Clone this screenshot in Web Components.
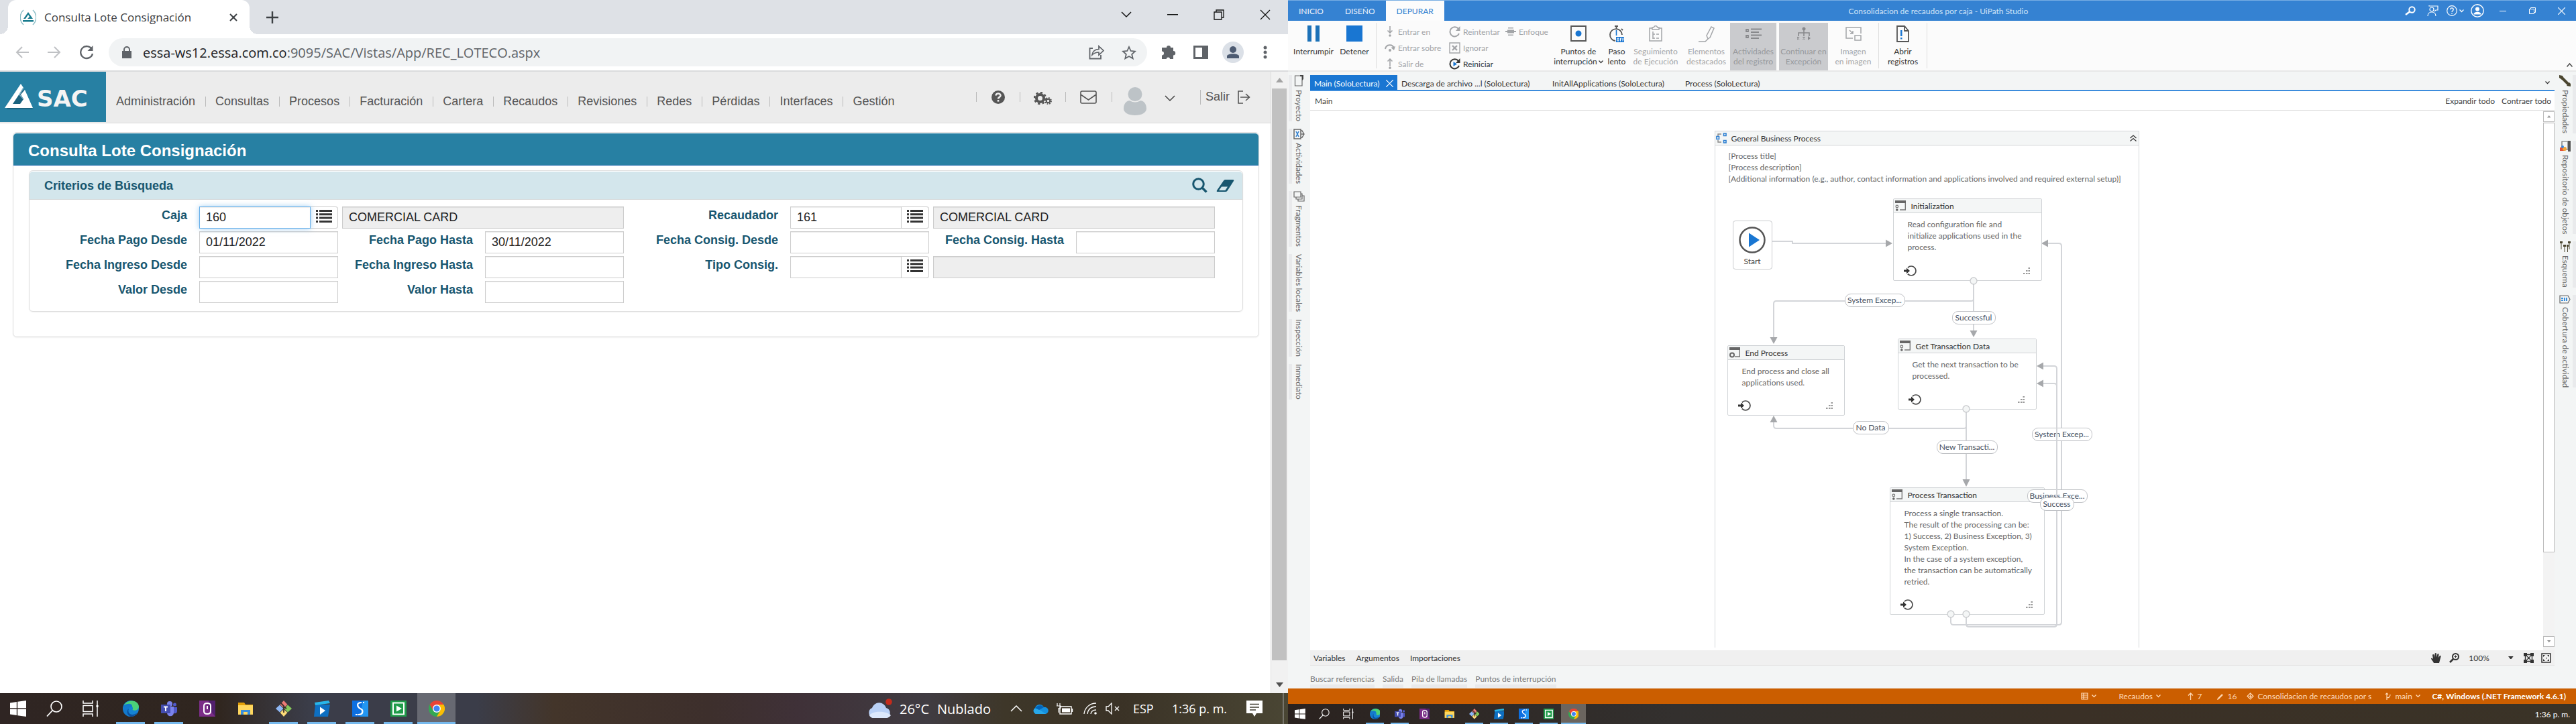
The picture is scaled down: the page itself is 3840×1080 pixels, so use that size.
<!DOCTYPE html>
<html lang="es">
<head>
<meta charset="utf-8">
<title>Escritorio</title>
<style>
html,body{margin:0;height:100%}
body{display:flex;font-family:"Open Sans","Noto Sans",sans-serif;background:#fff;overflow:hidden}
browser-window,studio-window{flex:1 1 0;min-width:0}
</style>
</head>
<body>
<browser-window></browser-window>
<studio-window></studio-window>
<script>
const RESET = `:host,*{box-sizing:border-box}button,input{font:inherit;color:inherit;margin:0}
button{background:none;border:0;padding:0;display:flex;align-items:center;justify-content:center;white-space:nowrap}
a{color:inherit;text-decoration:none}ui-icon{flex:none}`;

class Base extends HTMLElement {
  connectedCallback() {
    if (this.shadowRoot) return;
    const t = document.createElement('template');
    t.innerHTML = `<style>${RESET}${this.css()}</style>${this.html()}`;
    this.attachShadow({mode: 'open'}).append(t.content.cloneNode(true));
  }
  a(n, d = '') { return this.getAttribute(n) ?? d; }
  css() { return ':host{display:block}'; }
  html() { return '<slot></slot>'; }
}
const def = (n, c) => customElements.define(n, c);
const S = (w, d, x = '') => `<path d="${d}" fill="none" stroke="currentColor" stroke-width="${w}" ${x}/>`;
const F = (d, c = 'currentColor') => `<path d="${d}" fill="${c}"/>`;

/* name: [width, height, markup] */
const ICONS = {
  favicon: [24,24, S(1.5,'M5 1A15 15 0 0 0 5 23M19 1A15 15 0 0 1 19 23','opacity=".5"') + F('M12 4 5 14h3l4-6 2 3-3 3h8z') + F('M4 16h16v2.500H4z')],
  x: [14,14, S(2,'M2 2 12 12M12 2 2 12')],
  xthin: [16,16, S(1.3,'M1 1 15 15M15 1 1 15')],
  plus: [18,18, S(2.4,'M9 0V18M0 9H18')],
  chev: [16,10, S(1.5,'M1 1 8 8 15 1')],
  min: [16,2, F('M0 0H16V1.500H0z')],
  restore: [16,16, S(1.3,'M1 4H12V15H1zM4 4V1H15V12H12')],
  back: [20,18, S(2,'M20 9H2M10 1 2 9 10 17')],
  fwd: [20,18, S(2,'M0 9H18M10 1 18 9 10 17')],
  reload: [22,22, S(2.4,'M19 6.500A9 9 0 1 0 20 13') + F('M20.500 1V9H12.500z')],
  lock: [14,18, F('M0 7H14V18H0z') + S(2,'M3 8V5a4 4 0 0 1 8 0V8')],
  share: [24,22, S(1.8,'M6 5H1.500V20.500H18V15') + S(1.7,'M5 15C6 9 10 6.500 15 6.500V2L22 8.500 15 15V11C11 11 8 12 5 15z')],
  star: [22,21, S(1.8,'M11 2 13.700 8 20 8.600 15.200 13 16.700 19.300 11 16 5.300 19.300 6.800 13 2 8.600 8.300 8z')],
  puzzle: [22,22, F('M8 4a3 3 0 0 1 6 0H18V9a3.200 3.200 0 0 1 0 6.400V21H13a2.600 2.600 0 0 0-5.200 0H1V15.500a3 3 0 0 0 0-6V4z')],
  panel: [22,22, F('M0 1H22V21H0z') + F('M3 4H13V18H3z','#fff')],
  profile: [32,32, '<circle cx="16" cy="16" r="16" fill="#dbe0e7"/><circle cx="16" cy="12" r="5" fill="#4d5b72"/>' + F('M7 25V22C7 17 25 17 25 22V25z','#4d5b72')],
  dots: [6,20, '<circle cx="3" cy="3" r="2.500"/><circle cx="3" cy="10" r="2.500"/><circle cx="3" cy="17" r="2.500"/>'],
  sac: [46,40, F('M3 38 24 3 34 18 29 28 43 38z','#1b637f') + F('M0 36 24 0 28 6 12 30H23L28 23 24 16 30 9 42 36z','#fff') + S(1.5,'M28 6 22 16 28 23','style="color:#7db0c5"')],
  help: [20,20, '<circle cx="10" cy="10" r="10"/>' + S(2.6,'M6.500 7.500C6.500 3.500 13.500 3.500 13.500 7.500 13.500 10 10 9.800 10 12.500','style="color:#ececec"') + F('M8.700 14h2.600v2.600H8.700z','#ececec')],
  cogs: [27,21, '<circle cx="9.500" cy="9.500" r="5.500" fill="none" stroke="currentColor" stroke-width="4"/><circle cx="9.500" cy="9.500" r="8.400" fill="none" stroke="currentColor" stroke-width="2.600" stroke-dasharray="3.300 3.300"/><circle cx="21.500" cy="13.500" r="2.800" fill="none" stroke="currentColor" stroke-width="2"/><circle cx="21.500" cy="13.500" r="4.600" fill="none" stroke="currentColor" stroke-width="1.800" stroke-dasharray="1.800 1.800"/>'],
  mail: [25,20, S(1.6,'M1 3Q1 1 3 1H22Q24 1 24 3V17Q24 19 22 19H3Q1 19 1 17zM1 6 12.500 14 24 6')],
  avatar: [36,42, '<ellipse cx="18" cy="10.500" rx="10.500" ry="10.500"/>' + F('M1 32C1 24 6 20 10 20Q18 25 26 20C30 20 35 24 35 32 35 38 28 42 18 42S1 38 1 32z')],
  exit: [19,20, S(1.6,'M8 1H1V19H8M4 10H17M12 5 17.500 10 12 15')],
  search: [23,23, '<circle cx="9.500" cy="9.500" r="7.800" fill="none" stroke="currentColor" stroke-width="3"/>' + S(3.4,'M15 15 21.500 21.500')],
  eraser: [27,18, F('M13 0H25Q27 0 26 2L17 16Q16 18 14 18H2Q0 18 1 16L11 1.500Q12 0 13 0z') + F('M8 10.500H17L13.500 16H4z','#d3e6ec')],
  list: [24,19, F('M0 0H3V3H0zM5 0H24V3H5zM0 5.300H3V8.300H0zM5 5.300H24V8.300H5zM0 10.600H3V13.600H0zM5 10.600H24V13.600H5zM0 16H3V19H0zM5 16H24V19H5z')],
  tup: [11,7, F('M0 7 5.500 0 11 7z')], tdown: [11,7, F('M0 0 5.500 7 11 0z')],
  win: [24,24, F('M0 3.500 9.800 2V11.300H0zM11.200 1.800 24 0V11.300H11.200zM0 12.700H9.800V22L0 20.500zM11.200 12.700H24V24L11.200 22.200z')],
  tsearch: [24,24, '<circle cx="15" cy="9" r="8" fill="none" stroke="currentColor" stroke-width="1.600"/>' + S(1.8,'M9.500 14.500 1 23.500')],
  tview: [24,24, S(1.5,'M1 0V4H15V0M1 24V20H15V24M1 7.500H15V16.500H1zM22 0V24') + F('M20.500 7H23.500V10H20.500z')],
  edge: [24,24, '<circle cx="12" cy="12" r="12" fill="#1583d3"/>' + F('M2 7C7-3 24-1 24 9 24 14 18 16 14.500 14 17 9 11 5 2 7z','#4bd27a') + F('M2 7C9 3 15 5 14 10 9 9 6 14 9 19 11 23 16 24 18 22 9 27-3 21 2 7z','#1379cc') + F('M9 12C6 20 14 24 22 18 19 22 16 24 12 24 6 22 5 15 9 12z','#0b4f9e')],
  teams: [24,24, '<circle cx="13" cy="5" r="4" fill="#7b83eb"/><circle cx="20.500" cy="6" r="2.500" fill="#5059c9"/>' + F('M9 9H19V18C19 25 9 25 9 18z','#7b83eb') + F('M19 10H24V16C24 20 19 20 19 18z','#5059c9') + F('M0 6H14V19H0z','#444dae') + S(2,'M4 9.500H10M7 9.500V16','style="color:#fff"')],
  orch: [24,24, F('M0 0H24V24H0z','#7b2d87') + F('M14 0H24V24L14 12z','#52206e') + S(2,'M12 4Q7 4 7 8V16Q7 20 12 20T17 16V8Q17 4 12 4zM12 8V13','style="color:#fff"')],
  folder: [24,24, F('M1 3H10L12 6H23V21H1z','#e3a008') + F('M1 7H23V21H1z','#ffd75e') + F('M5 21V14H19V21H15V17H9V21z','#3a8fdc')],
  git: [24,24, F('M12 0 17.500 6 12 11 6.500 6z','#ee7b76') + F('M6 6.500 11.500 12 6 17.500 0 12z','#8fb8f5') + F('M18 6.500 24 12 18 17.500 12.500 12z','#86c95b') + F('M12 13 17.500 18 12 24 6.500 18z','#fcdb78') + S(1.8,'M8 4 12 8V18M12 9 16 12','style="color:#3b2e2a"')],
  studio: [24,24, F('M2 6H24L21 24H0z','#0e6fc1') + F('M1 3 22 0 24 4 2 7z','#28b6ea') + F('M9 9.500 17 15 9 21z','#fff')],
  assist: [24,24, F('M0 0H24V24H0z','#0d6fe0') + F('M16 0H24V24H12z','#2396f2') + S(2.2,'M14 3C5 3 8 10 12 12 17 14 17 21 9 21M8 21H5M16 3H18','style="color:#fff"')],
  robot: [24,24, F('M0 0H24V24H0z','#1f9c4a') + S(2,'M4 3.500H20V20.500H4z','style="color:#fff"') + F('M9 7.500 17 12 9 16.500z','#fff')],
  chrome: [24,24, '<circle cx="12" cy="12" r="12" fill="#34a853"/>' + F('M1.600 6A12 12 0 0 1 22.400 6H12L6.800 15z','#ea4335') + F('M22.400 6A12 12 0 0 1 12 24L17.200 15 12 6z','#fbbc04') + '<circle cx="12" cy="12" r="6" fill="#fff"/><circle cx="12" cy="12" r="4.600" fill="#4285f4"/>'],
  cloud: [38,30, F('M8 29A8 8 0 0 1 7 14 11 11 0 0 1 28 14 8 8 0 0 1 29 29z','#b9d0f6') + F('M3 25C8 18 28 18 35 25Q32 29 28 29H8Q4 28 3 25z','#dce8fc') + '<circle cx="32" cy="5" r="4.800" fill="#c42b1c"/>'],
  up: [18,10, S(1.5,'M1 9 9 1 17 9')],
  onedrive: [24,15, F('M5 15A5 5 0 0 1 4 6 7 7 0 0 1 17 5 5 5 0 0 1 20 15z','#1490df') + F('M8 7 20 15H5A5 5 0 0 1 3 7z','#28a8ea') + F('M8 3A7 7 0 0 1 17 5L10 9 4 6z','#0364b8')],
  battery: [26,17, S(1.4,'M6 5H23V16H6zM24.500 8V13') + F('M9 7.500H21V13.500H9z') + S(1.2,'M2 0V4M6 0V4M1 4H7V7Q4 10 4 7V14')],
  wifi: [20,18, S(1.3,'M1 17C2 8 9 1 19 1M6 17C7 10 11 6 19 6M11 17Q12 11 19 11') + '<circle cx="18" cy="16" r="1.800"/>'],
  mute: [22,18, S(1.3,'M1 6H4L9 1V17L4 12H1zM14 6 20 12M20 6 14 12')],
  note: [24,24, F('M0 0H24V19H15L12 24 9 19H0z') + S(1.6,'M5 5.500H19M5 10H19M5 14H14','style="color:#423f33"')],
  /* studio */
  pause: [18,24, F('M0 0H6V24H0zM12 0H18V24H12z','#1d72b8')],
  stop: [24,24, F('M0 0H24V24H0z','#1976d2')],
  into: [16,16, S(1.6,'M8 0V10M4.500 6.500 8 10 11.500 6.500') + '<circle cx="8" cy="14" r="1.800"/>'],
  over: [16,16, S(2,'M1 10C2 3 12 2 14 9') + F('M16 6 14 12 9.500 8z') + '<circle cx="8" cy="12" r="2"/>'],
  out: [16,16, S(1.6,'M8 12V1M4.500 4.500 8 1 11.500 4.500') + '<circle cx="8" cy="14.200" r="1.800"/>'],
  retry: [17,17, S(2,'M14 4A7 7 0 1 0 15 11') + F('M16.500 0V7H10z')],
  ignore: [17,17, S(1.4,'M1 1H16V16H1z') + S(2.4,'M5 5 12 12M12 5 5 12')],
  restart: [17,17, S(2,'M14 4A7 7 0 1 0 15 11') + F('M16.500 0V7H10z') + F('M6.500 5 12 8.500 6.500 12z','#1976d2')],
  focus: [16,12, F('M4 0H12V1.500H4zM4 10.500H12V12H4zM3 3.500H13V8.500H3zM0 5H16V7H0z')],
  bp: [24,24, S(1.8,'M1 1H23V23H1z') + '<circle cx="12" cy="12" r="4.500" fill="#1976d2"/>'],
  slow: [24,25, S(1.8,'M9 1H14M11.500 1V5M19 5 21 7M10 23A9 9 0 1 1 20 14') + F('M10.700 7H12.300V15H10.700z','#1976d2') + F('M11 17H23V25H11z','#1976d2') + S(1,'M13 19H15V23H13zM17.500 23.500V19H19.500M17.500 21H19M21 23.500V19H22.500M21 21H22.500','style="color:#fff"')],
  track: [20,24, S(1.5,'M5 4H1V23H19V4H15M5 6V3H7Q10-2 13 3H15V6zM6 9V20M6 13H9M6 19H9M11 13H15M11 19H15')],
  pen: [24,25, S(1.5,'M0 24H10L14 20 12 15 19 2 23 4 17 18 14 20')],
  log: [24,16, S(1.8,'M1 2H4V5H1zM8 1.500H24M8 6H20M1 11H4V14H1zM8 10.500H24M8 15H20')],
  cont: [20,20, '<circle cx="10" cy="3" r="2.500"/>' + S(1.6,'M10 5V9M2 14V9H18V14M10 9V14') + S(1.2,'M0 15 3 19M3 15 0 19M8.500 15 11.500 19M11.500 15 8.500 19') + F('M16 14 20 17 16 20z')],
  pip: [24,21, S(1.5,'M23 10V1H1V17H11M14 13H23V20H14zM6 5 11 10M11 6V10H7')],
  logs: [19,25, S(1.8,'M1 1H12L18 8V24H1zM12 1V8H18') + F('M6 7H8.500V16H6zM6 18H8.500V20.500H6z','#1976d2')],
  usearch: [18,14, '<circle cx="11.500" cy="5.500" r="4.200" fill="none" stroke="currentColor" stroke-width="2"/>' + S(2.6,'M8 8.500 2 13')],
  feedback: [17,16, S(1.2,'M3 0V1H16V7H13L11 9') + '<circle cx="7" cy="6" r="3" fill="none" stroke="currentColor" stroke-width="1.200"/>' + S(1.2,'M1 16C1 8 13 8 13 16')],
  qhelp: [16,16, '<circle cx="8" cy="8" r="7.300" fill="none" stroke="currentColor" stroke-width="1.200"/>' + S(1.3,'M5.800 6.200C5.800 3.200 10.200 3.200 10.200 6.200 10.200 8 8 7.800 8 10M8 11.500V13')],
  user: [20,20, '<circle cx="10" cy="10" r="9.200" fill="none" stroke="currentColor" stroke-width="1.400"/><circle cx="10" cy="7.500" r="3"/>' + F('M4.500 15.500C4.500 10.500 15.500 10.500 15.500 15.500z')],
  sx: [11,11, S(1.2,'M0 0 11 11M11 0 0 11')],
  srestore: [10,10, S(1,'M.5 2.500H7.500V9.500H.5zM2.500 2.500V.5H9.500V7.500H7.500')],
  smin: [10,1, F('M0 0H10V1H0z')],
  schev: [7,5, S(1.3,'M.5 .5 3.500 3.500 6.500 .5')], sup: [9,6, S(1.5,'M.5 5.500 4.500 1 8.500 5.500')],
  proj: [14,17, S(1.2,'M1.500 1H12V16H1.500z') + F('M9 0H14V6L12 8V2H9z','#444')],
  acts: [17,16, S(1.5,'M1 1H11V15H1z') + S(1.4,'M11 3H13L16 8 13 13H11M12 8H16') + S(1.6,'M4 4 8 12M8 4 4 12','style="color:#2f7fd0"')],
  frag: [17,16, S(1.2,'M1 1H11V9H1zM4 9.500V12H13V4H11.500M7 12.500V15H16V7H13.500')],
  wrench: [17,17, S(4,'M5 5 14 14','style="color:#4b4630"') + F('M0 0 5 1 7 5 4 7 0 4zM11 16 15 11 17 13V17z','#4b4630')],
  repo: [16,16, S(1.2,'M3 1H12V13H3z') + F('M10 0H16V16H12V0z','#555') + F('M0 10H7V15H0z','#e0533a') + '<circle cx="7" cy="12" r="3" fill="#f0a63a"/><circle cx="4" cy="9" r="2" fill="#3a86d8"/>'],
  outline: [16,16, F('M0 0H4V3H0zM12 0H16V3H12zM5 5H9V8H5zM10 5H13V8H10zM1.500 3H2.500V12H1.500zM13.500 3H14.500V12H13.500zM6.500 8H7.500V16H6.500zM11 8H12V16H11z','#4b4630')],
  cover: [17,13, S(1.2,'M1 1H13L16 6.500 13 12H1z') + F('M3 4H6V6H3zM7 4H9V9H7zM3 7H6V9H3zM10 4H12V9H10z','#3a8fdc')],
  seq: [16,16, S(1.4,'M8 2H3V5M3 11V14H8','style="color:#888"') + S(1.6,'M1 5.500H4.500V9.500H1zM11.500 1H15V4.500H11.500zM11.500 11.500H15V15H11.500z','style="color:#2a7dd1"')],
  dchev: [10,10, S(1.3,'M.5 5 5 1 9.500 5M.5 9.500 5 5.500 9.500 9.500')],
  state: [16,16, F('M0 0H16V4H0z','#666') + S(1.4,'M15.300 4V14H7','style="color:#777"') + '<circle cx="2.800" cy="9" r="1.800" fill="none" stroke="#777" stroke-width="1.200"/><circle cx="2.800" cy="14" r="1.800" fill="#666"/>'],
  fstate: [16,16, F('M0 0H16V4H0z','#666') + S(1.4,'M15.300 4V14H8','style="color:#777"') + '<circle cx="4" cy="11.500" r="3" fill="none" stroke="#666" stroke-width="2"/>'],
  enter: [19,16, '<circle cx="11" cy="8" r="7" fill="none" stroke="#4a4a4a" stroke-width="1.700"/>' + F('M2 3H6V13H2z','#fff') + F('M0 6.500H4V3.500L9 8 4 12.500V9.500H0z','#333')],
  grip: [10,10, F('M7.500 0H10V2H7.500zM4 4H6.500V6H4zM7.500 4H10V6H7.500zM0 8H2.500V10H0zM4 8H6.500V10H4zM7.500 8H10V10H7.500z','#999')],
  play: [40,40, '<circle cx="20" cy="20" r="18.500" fill="#fff" stroke="#555" stroke-width="2.500"/>' + F('M15 9.500 31 20 15 30.500z','#1976d2')],
  hand: [15,15, F('M4 15C3 12 0 10 0 8Q1 7 3 9L2 3Q3 1 4.500 3L5 7 5.500 1Q7-1 8 1V6.500L9.500 1.500Q11 .5 11.500 2L11 7 13 4Q15 3.500 14.500 5.500L12 15z')],
  zoomi: [15,15, '<circle cx="9.500" cy="5.500" r="4.500" fill="none" stroke="currentColor" stroke-width="2"/>' + S(2.6,'M6 9 1 14') + S(1,'M7.500 5.500H11.500M9.500 3.500V7.500')],
  fit: [15,15, F('M0 0H5V5H0zM10 0H15V5H10zM0 10H5V15H0zM10 10H15V15H10z') + S(1.4,'M5 2.500H10M5 12.500H10M2.500 5V10M12.500 5V10M5 5 10 10M10 5 5 10')],
  fitall: [15,15, S(1.5,'M1 1H14V14H1z') + F('M3 3H6L3 6zM12 3V6L9 3zM3 12V9L6 12zM12 12H9L12 9zM7 7H8.500V8.500H7z')],
  fork: [10,12, S(1.2,'M3 11V1M3 8Q8 8 8 3M1 3 3 1 5 3')], diam: [11,11, S(1.2,'M5.500 1 10 5.500 5.500 10 1 5.500zM5.500 3V8M3 5.500H8')],
  arrup: [9,11, S(1.3,'M4.500 11V1M1 4.500 4.500 1 8 4.500')], pencil: [10,10, S(2.4,'M2 8 8 2') + F('M0 10 1 7 3 9z')],
  db: [11,11, S(1.2,'M1 1H10V10H1zM1 4H10M1 7H10M4 1V10')]
};
def('ui-icon', class extends Base {
  css() { return ':host{display:inline-flex;line-height:0}svg{display:block;fill:currentColor}'; }
  html() {
    const [w, h, b] = ICONS[this.a('name')], k = +this.a('scale', '1');
    return `<svg width="${w*k}" height="${h*k}" viewBox="0 0 ${w} ${h}" aria-hidden="true">${b}</svg>`;
  }
});
const ic = (n, x = '') => `<ui-icon name="${n}" ${x}></ui-icon>`;

/* ---------- browser ---------- */
def('browser-window', class extends Base {
  css() { return `:host{display:flex;flex-direction:column;height:100vh;min-width:0}
    main{flex:1;display:flex;min-height:0}.page{flex:1;min-width:0;border-right:1px solid #ddd;font-family:"Liberation Sans",Arial,sans-serif}`; }
  html() { return `<browser-tabs></browser-tabs><browser-toolbar></browser-toolbar>
    <main><div class="page"><sac-header></sac-header><sac-search></sac-search></div><scroll-track></scroll-track></main>
    <task-bar></task-bar>`; }
});
def('browser-tabs', class extends Base {
  css() { return `:host{display:flex;height:51px;background:#dee1e6;color:#3c4043;padding-left:12px}
    .tab{width:360px;background:#fff;border-radius:12px 12px 0 0;display:flex;align-items:center;padding:0 17px 0 18px;font-size:17px;position:relative}
    .tab:before,.tab:after{content:"";position:absolute;bottom:0;width:12px;height:12px}
    .tab:before{left:-12px;background:radial-gradient(circle at 0 0,#dee1e6 12px,#fff 12px)}
    .tab:after{right:-12px;background:radial-gradient(circle at 100% 0,#dee1e6 12px,#fff 12px)}
    .tab ui-icon:first-child{color:#187b8e}.tab button ui-icon{color:#3c4043}
    .t{margin-left:12px;flex:1;white-space:nowrap}.new{width:67px}.sp{flex:1}.w{width:69px;height:43px;color:#111}`; }
  html() { return `<div class="tab">${ic('favicon')}<span class="t">Consulta Lote Consignación</span><button aria-label="Cerrar pestaña"><span></span>${ic('x')}</button></div>
    <button class="new" aria-label="Nueva pestaña">${ic('plus')}</button><span class="sp"></span>
    ${['chev','min','restore','xthin'].map(n => `<button class="w" aria-label="${n}">${ic(n)}</button>`).join('')}`; }
});
def('browser-toolbar', class extends Base {
  css() { return `:host{display:flex;align-items:center;height:56px;border-bottom:2px solid #dadbdd;background:#fff;color:#5f6368;padding:0 10px 0 9px}
    button{width:48px;height:42px}.off{color:#bfc1c4}
    .pill{flex:1;height:42px;border-radius:21px;background:#f1f3f4;display:flex;align-items:center;margin:0 8px 0 9px;padding:0 3px 0 20px;font-size:20px}
    .pill span{flex:1;margin-left:17px;white-space:nowrap}b{font-weight:400;color:#202124}`; }
  html() { return `<button class="off" aria-label="Atrás">${ic('back')}</button><button class="off" aria-label="Adelante">${ic('fwd')}</button><button aria-label="Recargar">${ic('reload')}</button>
    <div class="pill">${ic('lock')}<span><b>essa-ws12.essa.com.co</b>:9095/SAC/Vistas/App/REC_LOTECO.aspx</span><button aria-label="Compartir">${ic('share')}</button><button aria-label="Favorito">${ic('star')}</button></div>
    ${['puzzle','panel','profile','dots'].map(n => `<button aria-label="${n}">${ic(n)}</button>`).join('')}`; }
});
def('scroll-track', class extends Base {
  css() { return `:host{display:flex;flex-direction:column;width:25px;background:#f1f1f1;padding:0 2px 0 1px}
    span{height:25px;display:flex;align-items:center;justify-content:center;color:#a3a3a3;flex:none}span:last-child{color:#505050}
    i{background:#c1c1c1;flex:853}b{flex:24}`; }
  html() { return `<span>${ic('tup')}</span><i></i><b></b><span>${ic('tdown')}</span>`; }
});
def('sac-header', class extends Base {
  css() { return `:host{display:flex;height:77px;background:#ececec;border-bottom:1px solid #dcdcdc;color:#555;font-size:18px}
    .logo{width:158px;height:75px;background:#2780a3;display:flex;align-items:center;padding:0 0 0 7px;color:#f4f4f4;font:bold 34px/34px "DejaVu Sans",sans-serif}
    .logo span{margin:4px 0 0 2px}
    nav{display:flex;align-items:center;padding-top:12px;line-height:20px}
    nav a{padding:0 15px;position:relative}nav a+a:before,.c:before{content:"";position:absolute;left:0;top:3px;height:15px;border-left:1px solid #bbb}
    .sp{flex:1}.c{position:relative;display:flex;align-items:center;justify-content:center;height:75px}.c:before{top:30px}
    .a{width:65px}.b{width:68px;padding-top:6px}.m{width:69px}.u{width:132px;justify-content:flex-start;padding-left:17px;color:#bdc3c7;padding-top:12px}
    .u .v{color:#444;margin:-8px 0 0 26px}.s{width:105px;justify-content:flex-start;padding-left:8px;gap:12px}.s:before{top:27px;height:22px}`; }
  html() { return `<div class="logo">${ic('sac')}<span>SAC</span></div>
    <nav>${['Administración','Consultas','Procesos','Facturación','Cartera','Recaudos','Revisiones','Redes','Pérdidas','Interfaces','Gestión'].map(t => `<a href="#">${t}</a>`).join('')}</nav><span class="sp"></span>
    <button class="c a" aria-label="Ayuda">${ic('help')}</button><button class="c b" aria-label="Configuración">${ic('cogs')}</button><button class="c m" aria-label="Mensajes">${ic('mail')}</button>
    <button class="c u" aria-label="Usuario">${ic('avatar')}<ui-icon class="v" name="chev"></ui-icon></button><a class="c s" href="#">Salir ${ic('exit')}</a>`; }
});
def('panel-box', class extends Base {
  css() { return `:host{display:block;border:1px solid #ddd;border-radius:6px;padding:1px 0 0;box-shadow:0 1px 2px rgba(0,0,0,.06)}
    header{display:flex;align-items:center;justify-content:space-between;border-radius:5px 5px 0 0}
    h1,h2{margin:0;font-weight:bold;white-space:nowrap}
    .l1{height:48px;background:#2780a3;border-bottom:1px solid #2b72b0;color:#fff;padding:4px 22px 0}.l1 h1{font-size:24px;line-height:28px}
    .l2{height:42px;background:#d3e6ec;border-bottom:1px solid #d5d9da;color:#17566f;padding:0 12px 0 22px}.l2 h2{font-size:18px;line-height:22px}`; }
  html() { const l = this.a('level'); return `<header class="l${l}"><h${l}>${this.a('heading')}</h${l}><slot name="tools"></slot></header><slot></slot>`; }
});
def('form-field', class extends Base {
  css() { return `:host{display:contents}label{text-align:right;font-weight:bold;color:#17566f;line-height:26px;white-space:nowrap}
    .g{display:flex;height:33px;min-width:0}input{border:1px solid #ccc;box-shadow:inset 0 1px 1px rgba(0,0,0,.08);height:33px;width:100%;min-width:0;padding:0 9px;background:#fff;color:#222;outline:0}
    .g input{flex:1}.g button{width:41px;border:1px solid #ccc;border-left:0;border-radius:0 4px 4px 0;color:#333;padding:0 1px 4px 0}
    .f{border-color:#66afe9!important;box-shadow:inset 0 1px 1px rgba(0,0,0,.08),0 0 8px rgba(102,175,233,.6)!important;position:relative}
    .d{grid-column:span 2;margin-left:-12px;width:calc(100% + 12px);background:#eee}`; }
  html() { const L = this.a('label'), look = this.hasAttribute('lookup');
    return `<label for="i">${L}</label><div class="g"><input id="i" value="${this.a('value')}" class="${this.hasAttribute('focused') ? 'f' : ''}">${look ? `<button type="button" aria-label="Buscar ${L}">${ic('list')}</button>` : ''}</div>
      ${look ? `<input class="d" readonly aria-label="Descripción ${L}" value="${this.a('desc')}">` : ''}`; }
});
def('sac-search', class extends Base {
  css() { return `:host{display:block;padding:13px 17px 0 19px}
    .in{display:block;margin:7px 23px 37px}.tools{display:flex;gap:13px;align-items:center;color:#17566f}
    form{display:flex;padding:10px 41px 12px 5px;font-size:18px}
    .h{flex:1;display:grid;grid-template-columns:212fr 207fr 183fr 207fr;gap:4px 18px;padding-left:18px;align-content:start;grid-auto-rows:33px}`; }
  html() { return `<panel-box level="1" heading="Consulta Lote Consignación"><panel-box class="in" level="2" heading="Criterios de Búsqueda">
    <div slot="tools" class="tools"><button aria-label="Buscar">${ic('search')}</button><button aria-label="Limpiar">${ic('eraser')}</button></div>
    <form><div class="h"><form-field label="Caja" value="160" lookup focused desc="COMERCIAL CARD"></form-field>
      <form-field label="Fecha Pago Desde" value="01/11/2022"></form-field><form-field label="Fecha Pago Hasta" value="30/11/2022"></form-field>
      <form-field label="Fecha Ingreso Desde"></form-field><form-field label="Fecha Ingreso Hasta"></form-field>
      <form-field label="Valor Desde"></form-field><form-field label="Valor Hasta"></form-field></div>
    <div class="h"><form-field label="Recaudador" value="161" lookup desc="COMERCIAL CARD"></form-field>
      <form-field label="Fecha Consig. Desde"></form-field><form-field label="Fecha Consig. Hasta"></form-field>
      <form-field label="Tipo Consig." lookup></form-field></div></form></panel-box></panel-box>`; }
});
def('task-bar', class extends Base {
  css() { return this.hasAttribute('compact') ? `:host{display:flex;height:30px;background:linear-gradient(90deg,#2a221f,#33302e 30%,#3a3026 60%,#3a3327);color:#fff;font-size:12px;padding:0 9px 0 0;align-items:center}
    button{width:37px;height:30px;position:relative}.s{width:36px}.s3{margin-right:3px}.run:after{content:"";position:absolute;bottom:0;left:5px;right:5px;height:2px;background:#76b9ed}.on{background:#6b655f}.on:after{left:0;right:0}
    .sp{flex:1}`
    : `:host{display:flex;height:46px;background:linear-gradient(90deg,#2f2523 0,#30261f 17%,#3b3d49 24%,#3b3d49 37%,#43352a 43%,#3d2f2c 55%,#3f3138 62%,#403c42 72%,#3e3729 78%,#3a3226 87%,#4a4634 100%);color:#fff;font-size:20px;align-items:center}
    button{width:57px;height:46px;position:relative}.s{width:54px}.s3{margin-right:4px}.run:after{content:"";position:absolute;bottom:0;left:7px;right:7px;height:3px;background:#76b9ed}.on{background:#676972}.on:after{left:0;right:0}
    .sp{flex:1}.r{display:flex;align-items:center;white-space:nowrap}.r>*{flex:none}`; }
  html() { const c = this.hasAttribute('compact'), k = c ? .66 : 1;
    const items = ['win s','tsearch s','tview s s3','edge run','teams run','orch','folder','git run','studio run','assist run','robot run','chrome run on'];
    return items.map(s => { const [n, ...cl] = s.split(' '); return `<button class="${cl.join(' ')}" aria-label="${n}">${ic(n, `scale="${k}"`)}</button>`; }).join('') +
      '<span class="sp"></span>' + (c ? '<span>1:36 p. m.</span>' :
      `<div class="r">${ic('cloud')}<span style="width:56px;margin-left:10px">26°C</span><span style="width:109px">Nublado</span>${ic('up')}<span style="width:15px"></span>${ic('onedrive')}<span style="width:11px"></span>${ic('battery')}<span style="width:15px"></span>${ic('wifi')}<span style="width:13px"></span>${ic('mute')}<span style="width:58px;margin-left:19px;font-size:18px">ESP</span><span style="width:111px;font-size:18px">1:36 p. m.</span>${ic('note')}<span style="width:30px"></span><span style="width:8px;height:46px;border-left:2px solid #77756b"></span></div>`); }
});

/* ---------- studio ---------- */
def('studio-window', class extends Base {
  css() { return `:host{display:flex;flex-direction:column;height:100vh;background:#f3f5f5;color:#444;font-family:Lato,"Open Sans",sans-serif;font-size:12px;min-width:0}
    .body{flex:1;display:flex;min-height:0}.mid{flex:1;min-width:0;display:flex;flex-direction:column}
    .tabs{display:flex;padding-top:5px;height:29px;border-bottom:2px solid #3c8cdc;align-items:stretch;color:#333}
    .tabs button{padding:2px 0 0 6px;justify-content:flex-start}.tabs .on{background:#1976d2;color:#fff;gap:9px}
    .sp{flex:1}.crumb{display:flex;justify-content:space-between;height:29px;background:#fff;border-bottom:1px solid #ddd;align-items:center;padding:0 5px 0 7px}
    .crumb div{display:flex;gap:10px}
    .cv{flex:1;background:#fff;display:flex;justify-content:center;min-height:0}
    .hold{flex:1;display:flex;justify-content:center;padding:30px 0 4px}
    .sb{width:17px;background:#f3f3f3;display:flex;flex-direction:column;padding:1px 0 5px}
    .sb span{height:16px;border:1px solid #bbb;background:#fff;color:#999;display:flex;align-items:center;justify-content:center}
    .sb i{flex:642;border:1px solid #bbb;background:#fff;margin-top:1px}.sb b{flex:125}
    .foot{height:23px;background:#f0f0f0;border-bottom:1px solid #e4e4e4;display:flex;align-items:center;padding:0 5px;color:#333}
    .foot .l{gap:16px;display:flex;flex:1}
    .bt{display:flex;gap:12px;padding:11px 0 0 33px;height:34px;color:#777}.bt button{line-height:17px;height:22px;align-items:flex-start;border-bottom:5px solid #e9eaec}
    .status{height:23px;background:#cb5e00;display:flex;justify-content:flex-end;align-items:center;color:#ffd9b5;padding-right:15px;white-space:nowrap}
    .status span{display:flex;align-items:center;gap:5px}.status b{color:#fff}`; }
  html() { return `<studio-title></studio-title><studio-ribbon></studio-ribbon>
  <div class="body"><side-dock side="left" items="proj:Proyecto,acts:Actividades,frag:Fragmentos,:Variables locales,:Inspección,:Inmediato"></side-dock>
   <div class="mid"><div class="tabs"><button class="on" style="width:130px">Main (SoloLectura) ${ic('sx')}</button><button style="width:225px">Descarga de archivo ...l (SoloLectura)</button><button style="width:198px">InitAllApplications (SoloLectura)</button><button>Process (SoloLectura)</button><span class="sp"></span><button style="width:14px;padding:0" aria-label="Más pestañas">${ic('schev')}</button></div>
   <div class="crumb"><span>Main</span><div><a href="#">Expandir todo</a><a href="#">Contraer todo</a></div></div>
   <div class="cv"><div class="hold"><flow-chart></flow-chart></div><div class="sb"><span>${ic('tup','scale=".5"')}</span><i></i><b></b><span>${ic('tdown','scale=".5"')}</span></div></div>
   <div class="foot"><div class="l"><button>Variables</button><button>Argumentos</button><button>Importaciones</button></div>
     ${ic('hand')}<span style="width:12px"></span>${ic('zoomi')}<span style="margin-left:14px;width:59px">100%</span>${ic('tdown','scale=".7"')}<span style="width:15px"></span>${ic('fit')}<span style="width:11px"></span>${ic('fitall')}</div></div>
   <side-dock side="right" items="wrench:Propiedades,repo:Repositorio de objetos,outline:Esquema,cover:Cobertura de actividad"></side-dock></div>
  <div class="bt"><button>Buscar referencias</button><button>Salida</button><button>Pila de llamadas</button><button>Puntos de interrupción</button></div>
  <div class="status"><span style="width:56px">${ic('db')}${ic('schev')}</span><span style="width:103px">Recaudos ${ic('schev')}</span><span style="width:44px">${ic('arrup')}7</span><span style="width:44px">${ic('pencil')}16</span><span style="width:206px">${ic('diam')}Consolidacion de recaudos por s</span><span style="width:70px">${ic('fork')}main ${ic('schev')}</span><b>C#, Windows (.NET Framework 4.6.1)</b></div>
  <task-bar compact></task-bar>`; }
});
def('studio-title', class extends Base {
  css() { return `:host{display:flex;height:31px;background:#3582d2;border-top:1px solid #78aee3;color:#fff;align-items:center}
    nav{display:flex;height:30px}nav a{padding:0 16px;display:flex;align-items:center;color:#e8f1fb}nav .on{background:#fcfcfc;color:#2f7fd0}
    .t{flex:1;text-align:center;padding-left:50px;color:#cfe3f7}.r{display:flex;align-items:center}.r button{height:30px}`; }
  html() { return `<nav><a href="#">INICIO</a><a href="#">DISEÑO</a><a href="#" class="on">DEPURAR</a></nav><span class="t">Consolidacion de recaudos por caja - UiPath Studio</span>
    <div class="r"><button style="width:34px" aria-label="Buscar">${ic('usearch')}</button><button style="width:33px" aria-label="Comentarios">${ic('feedback')}</button><button style="width:34px;gap:3px" aria-label="Ayuda">${ic('qhelp')}${ic('schev')}</button><button style="width:32px" aria-label="Cuenta">${ic('user')}</button><button style="width:44px" aria-label="Minimizar">${ic('smin')}</button><button style="width:44px" aria-label="Restaurar">${ic('srestore')}</button><button style="width:43px" aria-label="Cerrar">${ic('sx')}</button></div>`; }
});
def('ribbon-button', class extends Base {
  css() { return `:host{display:flex}button{flex:1;flex-direction:column;justify-content:flex-start;padding-top:7px;line-height:15px;white-space:nowrap;color:#333}
    .i{height:24px;display:flex;align-items:center;color:#555;margin-bottom:7px}span{text-align:center}
    :host([off]) button{color:#a3a5a8}:host([off]) .i{color:#a3a5a8}:host([sel]){padding-top:3px}:host([sel]) button{background:#cacbce;color:#96989b;padding-top:4px}:host([sel]) .i{color:#88898c}`; }
  html() { return `<button><span class="i">${ic(this.a('icon'))}</span><span><slot></slot></span></button>`; }
});
def('studio-ribbon', class extends Base {
  css() { return `:host{display:flex;height:76px;background:#fbfbfb;border-bottom:2px solid #e7e8e8;padding:0 0 0 3px;align-items:stretch}
    .sep{width:1px;margin:3px 0;background:#ddd}.g{display:grid;grid-template-rows:24px 24px 24px;padding-top:4px}.g button{justify-content:flex-start;color:#a3a5a8;gap:4px}
    .g .k{color:#333}.sp{flex:1}.e{align-self:flex-end;height:16px;width:14px;justify-content:flex-start}`; }
  html() { const g = a => `<div class="g">${a.map(([i, t, c]) => `<button class="${c || ''}">${ic(i)}${t}</button>`).join('')}</div>`;
    return `<ribbon-button icon="pause" style="width:70px">Interrumpir</ribbon-button><ribbon-button icon="stop" style="width:52px;margin-right:6px">Detener</ribbon-button><div class="sep"></div>
    <div style="width:12px"></div><div style="width:96px">${g([['into','Entrar en'],['over','Entrar sobre'],['out','Salir de']])}</div>
    <div style="width:84px">${g([['retry','Reintentar'],['ignore','Ignorar'],['restart','Reiniciar','k']])}</div><div style="width:70px">${g([['focus','Enfoque']])}</div>
    <ribbon-button icon="bp" style="width:78px">Puntos de<br>interrupción<ui-icon name="schev" style="vertical-align:middle;margin-left:2px"></ui-icon></ribbon-button><ribbon-button icon="slow" style="width:36px">Paso<br>lento</ribbon-button>
    <ribbon-button off icon="track" style="width:80px">Seguimiento<br>de Ejecución</ribbon-button><ribbon-button off icon="pen" style="width:71px">Elementos<br>destacados</ribbon-button>
    <ribbon-button off sel icon="log" style="width:69px;margin-right:4px">Actividades<br>del registro</ribbon-button><ribbon-button off sel icon="cont" style="width:73px">Continuar en<br>Excepción</ribbon-button>
    <ribbon-button off icon="pip" style="width:75px">Imagen<br>en imagen</ribbon-button><div class="sep"></div><ribbon-button icon="logs" style="width:71px">Abrir<br>registros</ribbon-button><div class="sep"></div>
    <span class="sp"></span><button class="e" aria-label="Contraer cinta">${ic('sup')}</button>`; }
});
def('side-dock', class extends Base {
  css() { const l = this.a('side') === 'left'; return `:host{display:flex;flex-direction:column;gap:11px;padding-top:5px;width:${l ? 33 : 32}px;color:#666;align-items:stretch}
    button{writing-mode:vertical-rl;justify-content:flex-start;gap:5px;line-height:18px;${l ? 'margin-left:1px;border-left:5px solid #e9eaec;padding-left:1px;width:24px' : 'border-right:5px solid #e9eaec;width:32px;padding-left:4px'}}`; }
  html() { return this.a('items').split(',').map(s => { const [i, t] = s.split(':'); return `<button>${i ? ic(i) : ''}${t}</button>`; }).join(''); }
});
def('flow-node', class extends Base {
  css() { return `:host{position:absolute;display:flex;flex-direction:column;border:1px solid #d0d3d6;border-radius:2px;background:#fff;color:#666}
    header{height:21px;background:#f4f6f6;border-bottom:1px solid #d0d3d6;display:flex;align-items:center;gap:8px;padding:0 2px;color:#333;white-space:nowrap}
    p{margin:8px 0 0 21px;line-height:17px;flex:1;white-space:nowrap}footer{display:flex;justify-content:space-between;align-items:center;padding:0 17px 6px 15px}`; }
  html() { return `<header>${ic(this.a('icon','state'))}${this.a('heading')}</header><p><slot></slot></p><footer>${ic('enter')}${ic('grip')}</footer>`; }
});
def('flow-label', class extends Base {
  css() { return `:host{position:absolute;height:20px;border:1px solid #c0c2c6;border-radius:9px;background:#fff;color:#44505f;display:flex;align-items:center;justify-content:center;line-height:18px;white-space:nowrap}`; }
});
def('flow-chart', class extends Base {
  css() { return `:host{display:block;position:relative;width:633px;border:1px solid #d5d7da;border-bottom:0}
    header{height:21px;background:#f4f6f6;border-bottom:1px solid #d0d3d6;display:flex;align-items:center;gap:7px;padding:0 3px 0 1px;color:#333}header span{flex:1}
    .d{margin:7px 0 0 20px;line-height:17px;color:#666;white-space:nowrap}
    svg{position:absolute;left:0;top:0;fill:none;stroke:#d3d5d9;stroke-width:2}svg .a{fill:#a6a8ab;stroke:none}svg .c{fill:#f4f6f6;stroke:#c9cbce;stroke-width:1.3}
    .start{position:absolute;left:26px;top:133px;width:59px;height:73px;border:1px solid #c9cbce;border-radius:4px;background:#fff;display:flex;flex-direction:column;align-items:center;padding-top:8px;gap:4px;color:#444}`; }
  html() { const L = (l, t, w, s) => `<flow-label style="left:${l}px;top:${t}px;width:${w}px">${s}</flow-label>`;
   return `<header>${ic('seq')}<span>General Business Process</span>${ic('dchev')}</header>
    <div class="d">[Process title]<br>[Process description]<br>[Additional information (e.g., author, contact information and applications involved and required external setup)]</div>
    <svg width="631" height="770"><path d="M85 164H115V167H256M385 223V300M385 250q0 3-4 3H91q-4 0-4 4V309M374 415V522M374 440q0 3-4 3H91q-4 0-4-4V431M351 720V732q0 4 4 4H512q4 0 4-4V171q0-4-4-4H495"/>
    <path class="a" d="M254 161.500 264 167 254 172.500zM379.500 297H390.500L385 307zM81.500 307H92.500L87 317zM81.500 434H92.500L87 424zM368.500 519H379.500L374 530zM496 161.500 486 167 496 172.500z"/></svg>
    <div class="start">${ic('play')}<span>Start</span></div>
    <flow-node heading="Initialization" style="left:265px;top:100px;width:222px;height:123px">Read configuration file and<br>initialize applications used in the<br>process.</flow-node>
    <flow-node heading="End Process" icon="fstate" style="left:18px;top:319px;width:175px;height:105px">End process and close all<br>applications used.</flow-node>
    <flow-node heading="Get Transaction Data" style="left:272px;top:309px;width:207px;height:106px">Get the next transaction to be<br>processed.</flow-node>
    <flow-node heading="Process Transaction" style="left:260px;top:531px;width:231px;height:190px">Process a single transaction.<br>The result of the processing can be:<br>1) Success, 2) Business Exception, 3)<br>System Exception.<br>In the case of a system exception,<br>the transaction can be automatically<br>retried.</flow-node>
    ${L(193,242,90,'System Excep...')}${L(353,268,65,'Successful')}${L(205,432,54,'No Data')}${L(330,461,91,'New Transacti...')}${L(472,442,90,'System Excep...')}${L(465,534,90,'Business Exce...')}
    <svg width="631" height="770"><path d="M374 720V735q0 4 4 4H505q4 0 4-4V354q0-4-4-4H488M509 380q0-4-4-4H488M374 736H509"/><path class="a" d="M489 344.500 479 350 489 355.500zM489 370.500 479 376 489 381.500z"/>
    <circle class="c" cx="385" cy="223" r="5"/><circle class="c" cx="374" cy="414" r="5"/><circle class="c" cx="351" cy="720" r="5"/><circle class="c" cx="374" cy="720" r="5"/></svg>
    ${L(484,546,51,'Success')}`; }
});
</script>
</body>
</html>
